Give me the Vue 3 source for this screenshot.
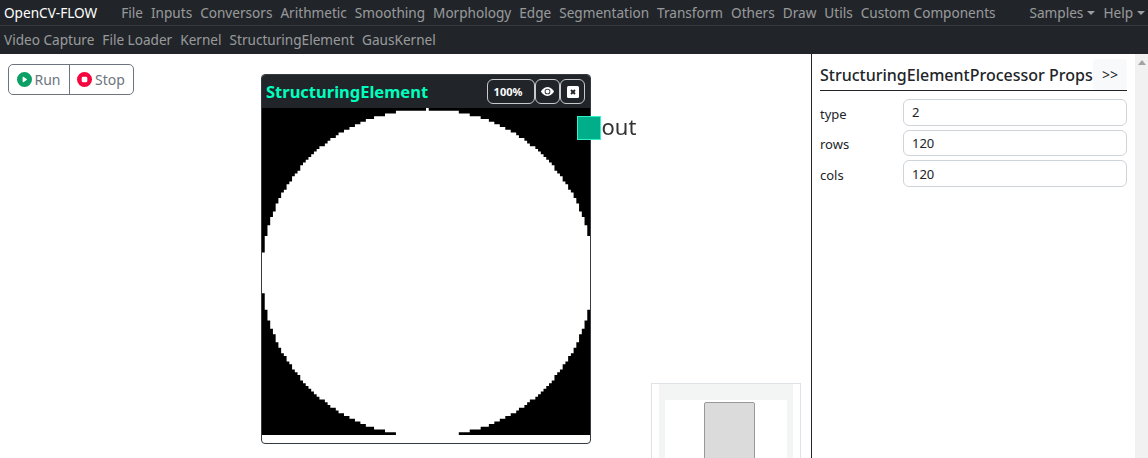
<template>
  <div class="app">
    <nav class="navbar top">
      <span class="brand">OpenCV-FLOW</span>
      <div class="menu">
        <a v-for="item in menus" :key="item" class="link">{{ item }}</a>
      </div>
      <div class="menu right">
        <a class="link caret">Samples</a>
        <a class="link caret">Help</a>
      </div>
    </nav>
    <nav class="navbar sub">
      <a v-for="item in tools" :key="item" class="link">{{ item }}</a>
    </nav>

    <div class="main">
      <div class="board">
        <div class="btn-group">
          <button class="btn">
            <svg class="btn-icon" viewBox="0 0 16 16" fill="#0a9f65">
              <path d="M16 8A8 8 0 1 1 0 8a8 8 0 0 1 16 0M6.79 5.093A.5.5 0 0 0 6 5.5v5a.5.5 0 0 0 .79.407l3.5-2.5a.5.5 0 0 0 0-.814z" />
            </svg>
            Run
          </button>
          <button class="btn">
            <svg class="btn-icon" viewBox="0 0 16 16" fill="#f5063f">
              <path d="M16 8A8 8 0 1 1 0 8a8 8 0 0 1 16 0M6.5 5A1.5 1.5 0 0 0 5 6.5v3A1.5 1.5 0 0 0 6.5 11h3A1.5 1.5 0 0 0 11 9.5v-3A1.5 1.5 0 0 0 9.5 5z" />
            </svg>
            Stop
          </button>
        </div>

        <div class="node">
          <div class="node-head">
            <span class="node-title">StructuringElement</span>
            <div class="node-actions">
              <span class="pill zoom">100%</span>
              <span class="pill">
                <svg width="13" height="13" viewBox="0 0 16 16" fill="#fff">
                  <path d="M10.5 8a2.5 2.5 0 1 1-5 0 2.5 2.5 0 0 1 5 0" />
                  <path d="M0 8s3-5.5 8-5.5S16 8 16 8s-3 5.5-8 5.5S0 8 0 8m8 3.5a3.5 3.5 0 1 0 0-7 3.5 3.5 0 0 0 0 7" />
                </svg>
              </span>
              <span class="pill">
                <svg width="12" height="12" viewBox="0 0 12 12">
                  <rect width="12" height="12" rx="1.5" fill="#fff" />
                  <path d="M4 4l4 4M8 4l-4 4" stroke="#212529" stroke-width="1.8" />
                </svg>
              </span>
            </div>
          </div>
          <canvas ref="preview" class="preview" width="328" height="327"></canvas>
          <div class="port"></div>
          <span class="port-label">out</span>
        </div>

        <div class="minimap">
          <div class="mini-frame">
            <div class="mini-page">
              <div class="mini-node"></div>
            </div>
          </div>
        </div>
      </div>

      <aside class="props">
        <div class="props-inner">
          <div class="props-head">
            <span class="props-title">StructuringElementProcessor Props</span>
            <button class="collapse">&gt;&gt;</button>
          </div>
          <div class="fields">
            <div v-for="field in fields" :key="field.name" class="field">
              <label class="field-label">{{ field.name }}</label>
              <input class="field-input" type="text" :value="field.value" />
            </div>
          </div>
        </div>
        <div class="scrollbar">
          <span class="scroll-up"></span>
        </div>
      </aside>
    </div>
  </div>
</template>

<script setup>
import { onMounted, ref } from "vue";

const menus = [
  "File",
  "Inputs",
  "Conversors",
  "Arithmetic",
  "Smoothing",
  "Morphology",
  "Edge",
  "Segmentation",
  "Transform",
  "Others",
  "Draw",
  "Utils",
  "Custom Components",
];
const tools = ["Video Capture", "File Loader", "Kernel", "StructuringElement", "GausKernel"];
const fields = [
  { name: "type", value: "2" },
  { name: "rows", value: "120" },
  { name: "cols", value: "120" },
];

const preview = ref(null);

// same row spans as cv2.getStructuringElement(MORPH_ELLIPSE, (120, 120)), scaled up blocky
onMounted(() => {
  const ctx = preview.value.getContext("2d");
  const sx = 328 / 120;
  const sy = 327 / 120;
  const r = 60;
  const left = [];
  const right = [];
  for (let i = 0; i < 120; i++) {
    const dy = i - r;
    const dx = Math.round(Math.sqrt(r * r - dy * dy));
    const from = Math.max(r - dx, 0) * sx;
    const to = Math.min(r + dx + 1, 120) * sx;
    left.push([from, i * sy], [from, (i + 1) * sy]);
    right.push([to, i * sy], [to, (i + 1) * sy]);
  }
  ctx.fillStyle = "#000";
  ctx.fillRect(0, 0, 328, 327);
  ctx.fillStyle = "#fff";
  ctx.beginPath();
  left.forEach(([x, y]) => ctx.lineTo(x, y));
  right.reverse().forEach(([x, y]) => ctx.lineTo(x, y));
  ctx.closePath();
  ctx.fill();
});
</script>

<style scoped>
.app {
  height: 458px;
  overflow: hidden;
  display: flex;
  flex-direction: column;
  font-family: "Noto Sans", sans-serif;
  font-size: 14px;
  color: #212529;
  background: #fff;
}

.navbar {
  display: flex;
  align-items: center;
  background: #212529;
  padding-left: 4px;
  font-size: 13.6px;
}

.top {
  height: 25px;
  border-bottom: 1px solid #363a3e;
  box-sizing: content-box;
}

.sub {
  height: 28px;
  gap: 8px;
  padding-bottom: 1px;
  box-sizing: border-box;
}

.brand {
  color: #fff;
  margin-right: 24px;
}

.menu {
  display: flex;
  gap: 8px;
}

.right {
  margin-left: auto;
  margin-right: 3px;
}

.link {
  color: rgba(255, 255, 255, 0.55);
  white-space: nowrap;
}

.caret::after {
  content: "";
  display: inline-block;
  margin-left: 4px;
  vertical-align: 3px;
  border-top: 4px solid;
  border-left: 4px solid transparent;
  border-right: 4px solid transparent;
}

.main {
  flex: 1;
  display: flex;
  min-height: 0;
}

.board {
  flex: 1;
  position: relative;
  padding: 10px 8px;
}

.btn-group {
  display: inline-flex;
  height: 31px;
  box-sizing: border-box;
  border: 1px solid #6c757d;
  border-radius: 5px;
}

.btn {
  display: flex;
  align-items: center;
  gap: 3px;
  padding: 0 8px;
  border: 0;
  background: transparent;
  color: #6c757d;
  font: inherit;
}

.btn-icon {
  width: 15px;
  height: 15px;
  margin-left: -0.5px;
}

.btn + .btn {
  border-left: 1px solid #6c757d;
}

.node {
  position: absolute;
  left: 261px;
  top: 20px;
  width: 330px;
  height: 370px;
  box-sizing: border-box;
  border: 1px solid #343a40;
  border-radius: 4px;
  background: #fff;
}

.node-head {
  height: 33px;
  display: flex;
  align-items: center;
  justify-content: space-between;
  padding: 0 5px 0 4px;
  background: #212529;
  border-radius: 3px 3px 0 0;
}

.node-title {
  color: #00ffbf;
  font-size: 16.5px;
  font-weight: 700;
}

.node-actions {
  display: flex;
}

.pill {
  width: 25px;
  height: 25px;
  box-sizing: border-box;
  display: flex;
  align-items: center;
  justify-content: center;
  border: 1px solid #c8cacb;
  border-radius: 6px;
  color: #fff;
  font-size: 11px;
  font-weight: 700;
}

.zoom {
  width: 48px;
  padding-right: 6px;
}

.preview {
  display: block;
  width: 328px;
  height: 327px;
}

.port {
  position: absolute;
  right: -11px;
  top: 41px;
  width: 24px;
  height: 24px;
  box-sizing: border-box;
  background: #00ae8a;
  border: 1px solid #2bf5cb;
}

.port-label {
  position: absolute;
  left: 339.5px;
  top: 36px;
  font-size: 22px;
  line-height: 30px;
  color: #333;
}

.minimap {
  position: absolute;
  left: 651px;
  top: 329px;
  width: 150px;
  height: 90px;
  box-sizing: border-box;
  border: 1px solid #e0e3e6;
  background: #fff;
  padding: 0 7px;
}

.mini-frame {
  height: 100%;
  background: #f3f5f5;
  padding: 16px 6px 0;
}

.mini-page {
  height: 100%;
  background: #fff;
  padding-top: 2px;
}

.mini-node {
  width: 51px;
  height: 70px;
  margin-left: 39px;
  box-sizing: border-box;
  background: #dbdbdb;
  border: 1px solid #999;
  border-radius: 2px 2px 0 0;
}

.props {
  width: 337px;
  box-sizing: border-box;
  display: flex;
  border-left: 1px solid #212529;
}

.props-inner {
  flex: 1;
  padding: 5px 8px 0;
}

.props-head {
  display: flex;
  align-items: center;
  justify-content: space-between;
  height: 31px;
  border-bottom: 1px solid #212529;
}

.props-title {
  font-size: 16px;
  font-weight: 500;
  white-space: nowrap;
}

.collapse {
  width: 34px;
  height: 31px;
  border: 0;
  border-radius: 4px;
  background: #f8f9fa;
  color: #212529;
  font: inherit;
  font-size: 14px;
  padding: 0;
}

.fields {
  display: flex;
  flex-direction: column;
  gap: 4px;
  margin-top: 8px;
}

.field {
  display: flex;
  align-items: center;
}

.field-label {
  width: 83px;
  font-size: 13px;
  padding-top: 3px;
}

.field-input {
  flex: 1;
  min-width: 0;
  height: 26.67px;
  box-sizing: border-box;
  padding: 0 8px;
  border: 1px solid #ced4da;
  border-radius: 6px;
  font: inherit;
  font-size: 13px;
  color: #212529;
}

.scrollbar {
  width: 13px;
  background: #f1f1f1;
  display: flex;
  justify-content: center;
  padding-top: 6px;
  box-sizing: border-box;
}

.scroll-up {
  width: 0;
  height: 0;
  border-left: 4px solid transparent;
  border-right: 4px solid transparent;
  border-bottom: 5px solid #a3a3a3;
}
</style>

<style>
body {
  margin: 0;
}
</style>
